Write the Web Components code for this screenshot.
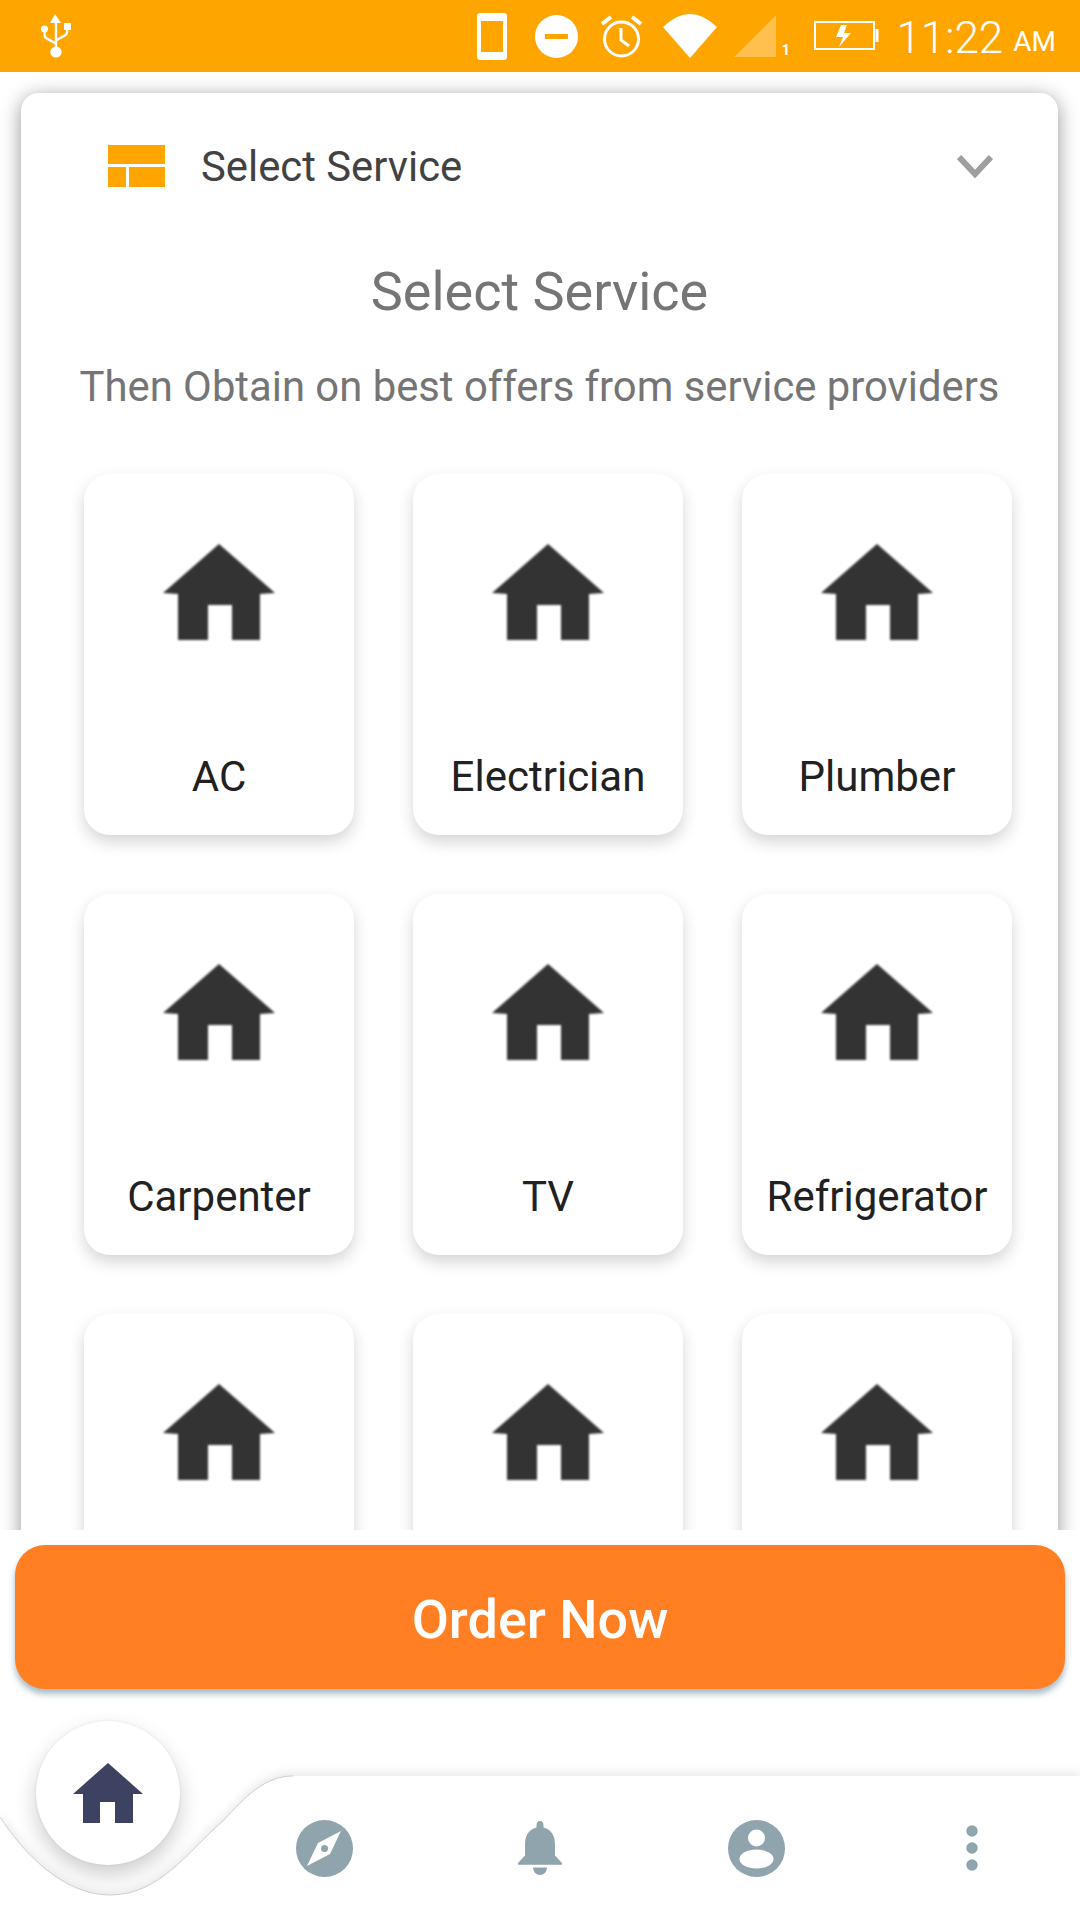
<!DOCTYPE html>
<html>
<head>
<meta charset="utf-8">
<title>Select Service</title>
<style>
  html, body { margin: 0; padding: 0; background: #fff; }
  body { width: 1080px; height: 1920px; overflow: hidden; font-family: Roboto, "Liberation Sans", sans-serif; }
  app-shell { height: 1920px; }
</style>
</head>
<body>
<app-shell>
  <status-bar slot="top"></status-bar>
  <service-panel heading="Select Service" note="Then Obtain on best offers from service providers">
    <service-tile>AC</service-tile>
    <service-tile>Electrician</service-tile>
    <service-tile>Plumber</service-tile>
    <service-tile>Carpenter</service-tile>
    <service-tile>TV</service-tile>
    <service-tile>Refrigerator</service-tile>
    <service-tile></service-tile>
    <service-tile></service-tile>
    <service-tile></service-tile>
  </service-panel>
  <order-button slot="action">Order Now</order-button>
  <bottom-nav slot="nav"></bottom-nav>
</app-shell>

<script>
class AppShell extends HTMLElement {
  constructor () {
    super()
    this.shadow = this.attachShadow({ mode: 'open' })
  }

  connectedCallback () {
    this.shadow.innerHTML = /* html */`
      <style>
        :host { display: flex; flex-direction: column; width: 1080px; }
        .content { height: 1458px; overflow: hidden; padding: 21px 21px 0 21px; box-sizing: border-box; }
      </style>
      <slot name="top"></slot>
      <div class="content"><slot></slot></div>
      <slot name="action"></slot>
      <slot name="nav"></slot>
    `
  }
}

class StatusBar extends HTMLElement {
  constructor () {
    super()
    this.shadow = this.attachShadow({ mode: 'open' })
  }

  connectedCallback () {
    this.shadow.innerHTML = /* html */`
      <style>
        :host { display: flex; align-items: center; height: 72px; background: #ffa500; color: #fff; padding: 0 24px 0 41px; box-sizing: border-box; }
        svg { display: block; flex: none; }
        .right { display: flex; align-items: center; align-self: stretch; margin-left: auto; }
        .sim { font: 700 15px Roboto, sans-serif; align-self: flex-end; margin: 0 0 13px 4px; width: 29px; }
        .time { font: 300 44px Roboto, sans-serif; margin: 3px 0 0 16px; }
        .ampm { font: 400 28px Roboto, sans-serif; margin-left: 10px; margin-top: 10px; }
      </style>
      <svg width="30" height="44" viewBox="0 0 30 44" fill="#fff">
        <path d="M14 0 L20 9 H16.2 V33 H13.8 V9 H9Z"/>
        <circle cx="15" cy="38" r="5.6"/>
        <circle cx="3.5" cy="15" r="3.5"/>
        <rect x="23" y="9" width="7" height="7"/>
        <path d="M2.4 16 V21 Q2.4 24 5 25.500 L14 30.500 V27.500 L6.500 23.500 Q4.600 22.500 4.600 20 V16Z"/>
        <path d="M25 15 V17.500 Q25 19.500 23 20.500 L15 25 V27.800 L24.500 22.500 Q27.300 21 27.300 17.500 V15Z"/>
      </svg>
      <div class="right">
        <svg width="30" height="47" viewBox="0 0 30 47"><path fill="#fff" fill-rule="evenodd" d="M3 0H27Q30 0 30 3V44Q30 47 27 47H3Q0 47 0 44V3Q0 0 3 0ZM4 8V39H26V8Z"/></svg>
        <svg style="margin-left:28px" width="43" height="43" viewBox="0 0 43 43"><circle cx="21.500" cy="21.500" r="21.500" fill="#fff"/><rect x="10" y="19" width="23" height="5" fill="#ffa500"/></svg>
        <svg style="margin-left:22px" width="43" height="43" viewBox="0 0 43 43" fill="none" stroke="#fff" stroke-width="3"><circle cx="21.500" cy="24" r="17"/><path d="M21 13V25L29 31" stroke-width="3"/><path d="M2 9 11 2M41 9 32 2" stroke-width="4"/></svg>
        <svg style="margin-left:20px" width="54" height="44" viewBox="0 0 54 44"><path fill="#fff" d="M0 13Q27 -13 54 13L27 44Z"/></svg>
        <svg style="margin-left:17px" width="43" height="42" viewBox="0 0 43 42"><path fill="#fff" fill-opacity=".3" d="M42 0V42H0Z"/></svg>
        <span class="sim">1</span>
        <svg style="margin-left:4px" width="66" height="30" viewBox="0 0 66 30" fill="none" stroke="#fff" stroke-width="2"><rect x="1" y="1" width="59" height="27"/><path d="M63 8V21" stroke-width="3"/><path fill="#fff" stroke="none" d="M33 4H27L22 16H29L25 26 37 12H30Z"/></svg>
        <span class="time">11:22</span><span class="ampm">AM</span>
      </div>
    `
  }
}

class ServicePanel extends HTMLElement {
  constructor () {
    super()
    this.shadow = this.attachShadow({ mode: 'open' })
  }

  connectedCallback () {
    this.shadow.innerHTML = /* html */`
      <style>
        :host { display: block; width: 1037px; background: #fff; border-radius: 18px; box-shadow: 0 4px 20px rgba(0,0,0,.42); padding-bottom: 80px; }
        .select { display: flex; align-items: center; height: 146px; padding: 0 65px 0 87px; color: #424242; font-size: 41.800px; }
        .select span { margin-left: 36px; flex: 1; }
        svg { display: block; }
        h2 { margin: 0; height: 106px; line-height: 106px; text-align: center; font-weight: 400; font-size: 54px; color: #757575; }
        p { margin: 0; height: 84px; line-height: 84px; text-align: center; font-size: 41.800px; color: #757575; }
        .grid { display: grid; grid-template-columns: repeat(3, 270px); column-gap: 59px; row-gap: 59px; padding: 45px 0 0 63px; }
      </style>
      <div class="select">
        <svg width="57" height="42" viewBox="0 0 57 42" fill="#ffa500"><rect width="57" height="19"/><rect y="22" width="18" height="20"/><rect x="21" y="22" width="36" height="20"/></svg>
        <span>${this.getAttribute('heading')}</span>
        <svg width="36" height="24" viewBox="0 0 36 24" fill="none" stroke="#9e9e9e" stroke-width="6"><path d="M2 3 18 20 34 3"/></svg>
      </div>
      <h2>${this.getAttribute('heading')}</h2>
      <p>${this.getAttribute('note')}</p>
      <div class="grid"><slot></slot></div>
    `
  }
}

class ServiceTile extends HTMLElement {
  constructor () {
    super()
    this.shadow = this.attachShadow({ mode: 'open' })
  }

  connectedCallback () {
    this.shadow.innerHTML = /* html */`
      <style>
        :host { display: flex; flex-direction: column; align-items: center; height: 361px; padding-top: 70px; box-sizing: border-box; background: #fff; border-radius: 26px; box-shadow: 0 7px 16px rgba(0,0,0,.17); color: #212121; font-size: 42px; }
        svg { display: block; filter: blur(1px); }
        .label { margin-top: 113px; line-height: 48px; height: 48px; white-space: nowrap; }
      </style>
      <svg width="112" height="96" viewBox="0 0 112 96"><path fill="#333" d="M56 0 112 49 97 50V96H69V61H45V96H15V50L0 49Z"/></svg>
      <div class="label"><slot></slot></div>
    `
  }
}

class OrderButton extends HTMLElement {
  constructor () {
    super()
    this.shadow = this.attachShadow({ mode: 'open' })
  }

  connectedCallback () {
    this.shadow.innerHTML = /* html */`
      <style>
        :host { display: block; height: 245px; padding: 15px 15px 0; box-sizing: border-box; background: #fff; position: relative; }
        button { display: block; width: 100%; height: 144px; padding: 4px 0 0; border: none; border-radius: 30px; background: #ff7f22; color: #fff; font: 500 54px Roboto, sans-serif; box-shadow: 0 5px 6px rgba(80,120,140,.5); }
      </style>
      <button><slot></slot></button>
    `
  }
}

class BottomNav extends HTMLElement {
  constructor () {
    super()
    this.shadow = this.attachShadow({ mode: 'open' })
  }

  connectedCallback () {
    this.shadow.innerHTML = /* html */`
      <style>
        :host { display: grid; grid-template-columns: repeat(5, 216px); height: 145px; position: relative; }
        .curve { position: absolute; left: 0; top: 0; filter: drop-shadow(0 -3px 5px rgba(0,0,0,.09)); }
        .item { position: relative; display: flex; align-items: center; justify-content: center; height: 146px; }
        .item svg { display: block; position: relative; }
        .active { position: absolute; left: 36px; top: -54px; width: 144px; height: 144px; border-radius: 50%; background: #fff; box-shadow: 0 10px 22px rgba(0,0,0,.2), 0 0 3px rgba(0,0,0,.08); display: flex; align-items: center; justify-content: center; }
      </style>
      <svg class="curve" width="1080" height="145" viewBox="0 0 1080 145">
        <path fill="#fff" d="M0 42C22 76 62 120 110 120C160 120 188 76 224 45C245 22 265 1 293 1H1080V145H0Z"/>
        <path fill="none" stroke="#c4c4c4" stroke-width=".8" d="M0 42C22 76 62 120 110 120C160 120 188 76 224 45C245 22 265 1 293 1"/>
      </svg>
      <div class="item">
        <div class="active">
          <svg width="70" height="60" viewBox="0 0 70 60"><path fill="#3d4263" d="M35 0 70 31H60V60H42V39H27V60H10V31H0Z"/></svg>
        </div>
      </div>
      <div class="item">
        <svg width="57" height="57" viewBox="0 0 57 57"><circle cx="28.500" cy="28.500" r="28.500" fill="#90a4ae"/><path fill="#fff" d="M45 11 34 34 11 46 22 23Z"/><circle cx="28.500" cy="28.500" r="3.500" fill="#90a4ae"/></svg>
      </div>
      <div class="item">
        <svg width="44" height="54" viewBox="0 0 50 58" preserveAspectRatio="none" fill="#90a4ae"><path d="M25 0Q29 0 29 5V7C38 9 42 16 42 25V37L50 45V47H0V45L8 37V25C8 16 12 9 21 7V5Q21 0 25 0Z"/><path d="M17 50H33Q32 58 25 58Q18 58 17 50Z"/></svg>
      </div>
      <div class="item">
        <svg width="57" height="57" viewBox="0 0 57 57"><circle cx="28.500" cy="28.500" r="28.500" fill="#90a4ae"/><circle cx="28.500" cy="18" r="8.500" fill="#fff"/><ellipse cx="28.500" cy="39" rx="17" ry="9.500" fill="#fff"/></svg>
      </div>
      <div class="item">
        <svg width="12" height="46" viewBox="0 0 12 46" fill="#90a4ae"><circle cx="6" cy="6" r="5.700"/><circle cx="6" cy="23" r="5.700"/><circle cx="6" cy="40" r="5.700"/></svg>
      </div>
    `
  }
}

customElements.define('app-shell', AppShell)
customElements.define('status-bar', StatusBar)
customElements.define('service-panel', ServicePanel)
customElements.define('service-tile', ServiceTile)
customElements.define('order-button', OrderButton)
customElements.define('bottom-nav', BottomNav)
</script>
</body>
</html>
